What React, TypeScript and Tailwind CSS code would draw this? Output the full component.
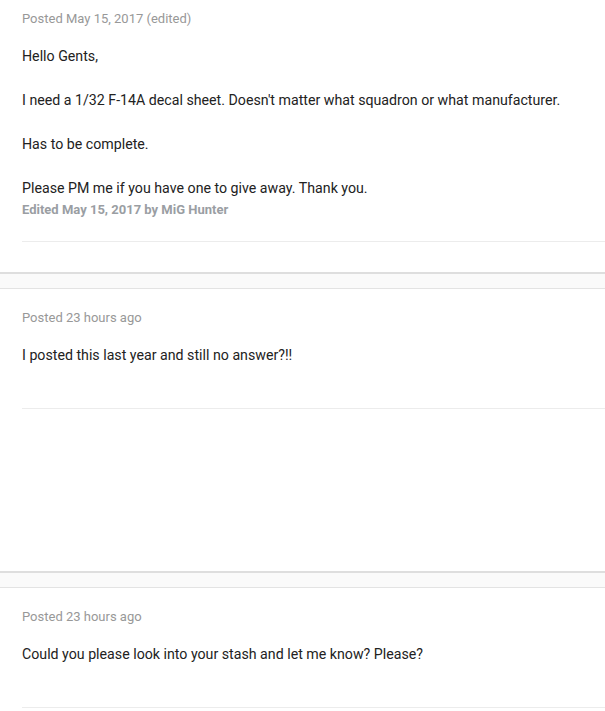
import React from "react";

interface Post {
  meta: string;
  paragraphs: string[];
  edited?: string;
}

const posts: Post[] = [
  {
    meta: "Posted May 15, 2017 (edited)",
    paragraphs: [
      "Hello Gents,",
      "I need a 1/32 F-14A decal sheet. Doesn't matter what squadron or what manufacturer.",
      "Has to be complete.",
      "Please PM me if you have one to give away. Thank you.",
    ],
    edited: "Edited May 15, 2017 by MiG Hunter",
  },
  {
    meta: "Posted 23 hours ago",
    paragraphs: ["I posted this last year and still no answer?!!"],
  },
  {
    meta: "Posted 23 hours ago",
    paragraphs: ["Could you please look into your stash and let me know? Please?"],
  },
];

function PostCard({ post }: { post: Post }) {
  return (
    <article className="min-h-[282px] bg-white pt-[19px] pl-[22px]">
      <p className="text-[13px] leading-[20px] text-[#989898]">{post.meta}</p>
      <div className="mt-[16px] border-b border-[#ececec] pb-[20px]">
        <div className="text-[14.2px] leading-[22px] text-[#222]">
          {post.paragraphs.map((p, i) => (
            <p
              key={i}
              className={post.edited && i === post.paragraphs.length - 1 ? "" : "mb-[22px]"}
            >
              {p}
            </p>
          ))}
        </div>
        {post.edited && (
          <p className="text-[13px] font-bold leading-[22px] text-[#9a9ea3]">{post.edited}</p>
        )}
      </div>
    </article>
  );
}

function Separator() {
  return <div className="h-[17px] border-t-2 border-b border-t-[#dedede] border-b-[#e3e3e3] bg-[#fafafa]" />;
}

export default function App() {
  return (
    <div className="min-h-screen overflow-hidden bg-white font-['Roboto',sans-serif]">
      <div className="-mt-[10px]">
        {posts.map((post, i) => (
          <React.Fragment key={i}>
            {i > 0 && <Separator />}
            <PostCard post={post} />
          </React.Fragment>
        ))}
      </div>
    </div>
  );
}
